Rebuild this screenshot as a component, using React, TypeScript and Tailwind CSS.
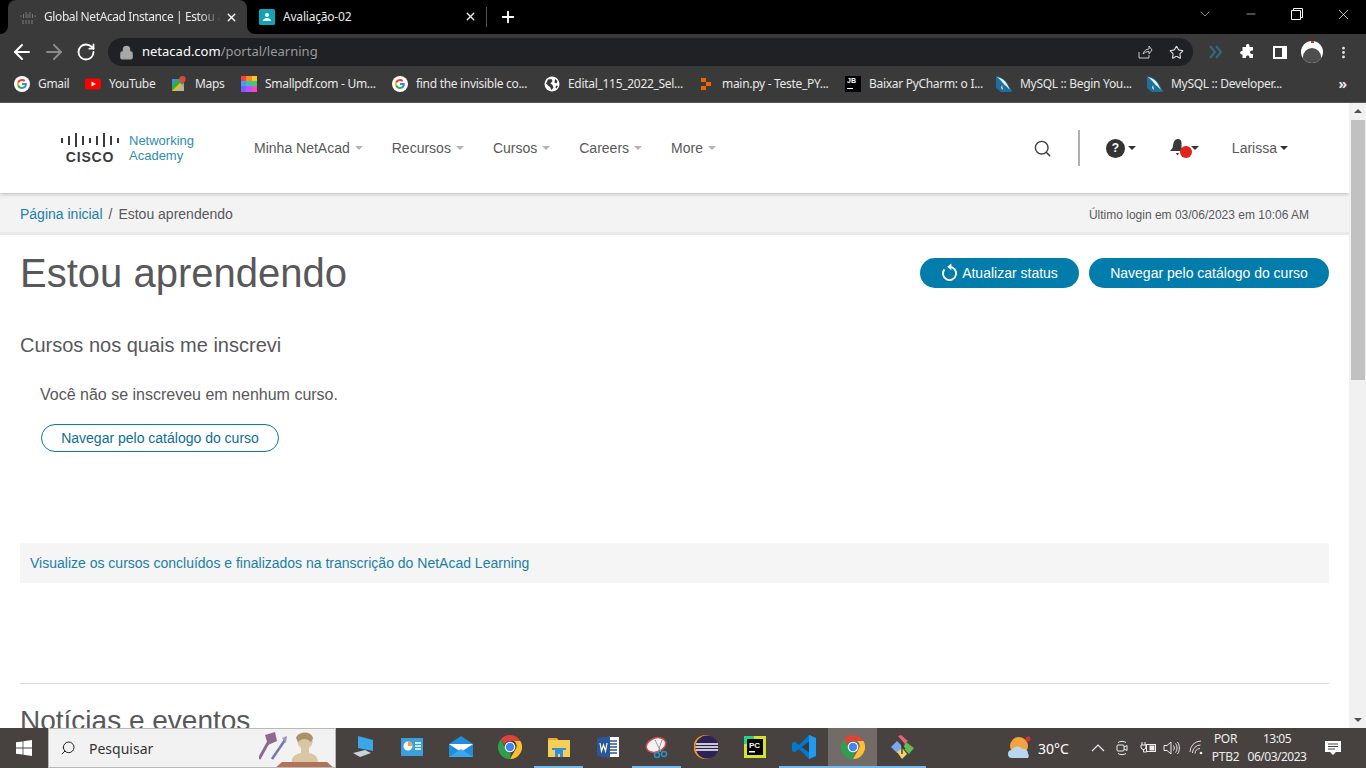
import { ArrowLeft, ArrowRight, ChevronDown, Lock, Minus, MoreVertical, Plus, RotateCw, Search, Star, X } from "lucide-react";

const arial = "font-['Liberation_Sans',Arial,sans-serif]";
const ui = "font-['Noto_Sans',sans-serif]";

function GoogleIcon() {
  return (
    <svg viewBox="0 0 16 16" className="w-4 h-4 shrink-0">
      <circle cx="8" cy="8" r="8" fill="#fff" />
      <path d="M12.900 8.100c0-.4 0-.7-.1-1H8v1.900h2.800c-.1.6-.5 1.200-1 1.500v1.300h1.600c1-.9 1.500-2.200 1.500-3.700z" fill="#4285f4" />
      <path d="M8 13c1.400 0 2.500-.5 3.400-1.200l-1.600-1.300c-.5.3-1 .5-1.800.5-1.300 0-2.500-.9-2.900-2.100H3.500v1.300C4.400 11.900 6 13 8 13z" fill="#34a853" />
      <path d="M5.100 8.900a3 3 0 0 1 0-1.900V5.700H3.500a5 5 0 0 0 0 4.500z" fill="#fbbc05" />
      <path d="M8 5c.8 0 1.400.3 1.900.8l1.400-1.400C10.500 3.500 9.400 3 8 3 6 3 4.400 4.100 3.500 5.700L5.100 7C5.500 5.800 6.700 5 8 5z" fill="#ea4335" />
    </svg>
  );
}

function YoutubeIcon() {
  return (
    <svg viewBox="0 0 16 16" className="w-4 h-4 shrink-0">
      <rect x="0" y="2.500" width="16" height="11" rx="3" fill="#f00" />
      <path d="M6.500 5.500v5L10.800 8z" fill="#fff" />
    </svg>
  );
}

function MapsIcon() {
  return (
    <svg viewBox="0 0 16 16" className="w-4 h-4 shrink-0">
      <path d="M1 3h12v12H1z" fill="#34a853" />
      <path d="M1 15 9 7l4 4v4z" fill="#fbbc05" />
      <path d="M1 3h5L1 8z" fill="#4285f4" />
      <path d="M4 15 13 6v9z" fill="#8ab4f8" opacity=".6" />
      <path d="M11.500 0a3.200 3.200 0 0 1 3.200 3.200C14.700 5.500 11.500 8 11.500 8S8.300 5.500 8.300 3.200A3.200 3.200 0 0 1 11.500 0z" fill="#d9483b" />
    </svg>
  );
}

function SmallpdfIcon() {
  const colors = ["#f6423f", "#fb8b1e", "#fdc42c", "#3aa0ff", "#37c6a2", "#48c774", "#7c5cff", "#c44dff", "#f24bc0"];
  return (
    <div className="grid grid-cols-3 w-4 h-4 shrink-0">
      {colors.map((c) => (
        <div key={c} style={{ background: c }} />
      ))}
    </div>
  );
}

function GlobeIcon() {
  return (
    <svg viewBox="0 0 16 16" className="w-4 h-4 shrink-0">
      <circle cx="8" cy="8" r="7.500" fill="#fff" />
      <path d="M4 3.500 7.500 3l1 2-2 2.500 2 1.500 1 2.500-2 2.500-1.500-3-2-1.500-2-2zM11 3l2.500 2-1 2.500-2-1zM12 9.500l2 .5-1.500 2.500-1-1z" fill="#3a3a3a" />
    </svg>
  );
}

function ReplIcon() {
  return (
    <svg viewBox="0 0 16 16" className="w-4 h-4 shrink-0">
      <path d="M3 2h5v4H3zM8 6h5v4H8zM3 10h5v4H3z" fill="#f26207" />
    </svg>
  );
}

function JbIcon() {
  return (
    <div className="w-4 h-4 shrink-0 bg-black flex flex-col px-[2px] pt-[1px]">
      <span className="text-white text-[7px] leading-[8px] font-bold font-['Liberation_Sans',sans-serif]">JB</span>
      <span className="w-[6px] h-px bg-white mt-[3px]" />
    </div>
  );
}

function MysqlIcon() {
  return (
    <svg viewBox="0 0 16 16" className="w-4 h-4 shrink-0">
      <path d="M0 0c6 1 11 5 13 10l3 5-1 1H5L0 12z" fill="#1f6f9c" />
      <path d="M1 1c5 1 9 4 11 9l2 4-4-4C7 8 6 5 1 1zM6 9l1 5-2-2z" fill="#e7f2f7" />
    </svg>
  );
}

const bookmarks = [
  { label: "Gmail", width: "w-[31px]", icon: <GoogleIcon /> },
  { label: "YouTube", width: "w-[46px]", icon: <YoutubeIcon /> },
  { label: "Maps", width: "w-[30px]", icon: <MapsIcon /> },
  { label: "Smallpdf.com - Um...", width: "w-[111px]", icon: <SmallpdfIcon /> },
  { label: "find the invisible co...", width: "w-[112px]", icon: <GoogleIcon /> },
  { label: "Edital_115_2022_Sel...", width: "w-[114px]", icon: <GlobeIcon /> },
  { label: "main.py - Teste_PY...", width: "w-[107px]", icon: <ReplIcon /> },
  { label: "Baixar PyCharm: o I...", width: "w-[111px]", icon: <JbIcon /> },
  { label: "MySQL :: Begin You...", width: "w-[111px]", icon: <MysqlIcon /> },
  { label: "MySQL :: Developer...", width: "w-[113px]", icon: <MysqlIcon /> },
];

function TabStrip() {
  return (
    <div className={`h-[34px] bg-black flex items-end pl-2 shrink-0 ${ui}`}>
      <div className="w-[239px] h-[34px] bg-[#3a3a3a] rounded-t-lg flex items-center pl-[12px] pr-[9px] relative">
        <span className="absolute -left-2 bottom-0 w-2 h-2 bg-[#3a3a3a]">
          <span className="block w-2 h-2 bg-black rounded-br-lg" />
        </span>
        <span className="absolute -right-2 bottom-0 w-2 h-2 bg-[#3a3a3a]">
          <span className="block w-2 h-2 bg-black rounded-bl-lg" />
        </span>
        <svg viewBox="0 0 16 16" className="w-4 h-4 shrink-0 mr-[8px]">
          <path d="M1 6v2M3.500 5v4M6 3v6M8 5v4M10 3v6M12.500 5v4M15 6v2" stroke="#777" strokeWidth="1" />
          <path d="M2 12h12M2 14h12" stroke="#666" strokeWidth="1.500" strokeDasharray="2 1" />
        </svg>
        <span className="flex-1 min-w-0 text-[12px] tracking-[-0.4px] text-[#e8e8e8] whitespace-nowrap overflow-hidden [mask-image:linear-gradient(to_right,black_88%,transparent)]">
          Global NetAcad Instance | Estou a
        </span>
        <X className="w-[13px] h-[13px] text-white ml-1 shrink-0" strokeWidth={2.500} />
      </div>
      <div className="w-[239px] h-[34px] flex items-center pl-[12px] pr-[9px] pb-px">
        <svg viewBox="0 0 16 16" className="w-4 h-4 shrink-0 mr-[8px]">
          <rect width="16" height="16" rx="1.500" fill="#12a4b4" />
          <circle cx="8" cy="6" r="2" fill="#fff" />
          <path d="M4 12c0-2 2-3 4-3s4 1 4 3z" fill="#fff" />
        </svg>
        <span className="flex-1 text-[12px] tracking-[-0.2px] text-[#e8e8e8] whitespace-nowrap">Avaliação-02</span>
        <X className="w-[13px] h-[13px] text-[#e8e8e8] shrink-0" strokeWidth={2.500} />
      </div>
      <div className="w-px h-[20px] bg-[#555] mb-[7px]" />
      <Plus className="w-[18px] h-[18px] text-white ml-[12px] mb-[8px]" strokeWidth={2.500} />
      <div className="flex-1 h-full flex items-start justify-end text-white">
        <div className="w-[46px] h-[28px] flex items-center justify-center">
          <ChevronDown className="w-[16px] h-[16px] text-[#ccc]" strokeWidth={1} />
        </div>
        <div className="w-[46px] h-[28px] flex items-center justify-center">
          <Minus className="w-[14px] h-[14px]" strokeWidth={1} />
        </div>
        <div className="w-[46px] h-[28px] flex items-center justify-center">
          <svg viewBox="0 0 12 12" className="w-[12px] h-[12px]" fill="none" stroke="#fff" strokeWidth="1">
            <path d="M.5 2.500h9v9h-9zM2.500 2.500v-2h9v9h-2" />
          </svg>
        </div>
        <div className="w-[46px] h-[28px] flex items-center justify-center">
          <X className="w-[17px] h-[17px]" strokeWidth={1} />
        </div>
      </div>
    </div>
  );
}

function Toolbar() {
  return (
    <div className={`h-[33px] bg-[#3a3a3a] flex items-center pt-[3px] shrink-0 ${ui}`}>
      <ArrowLeft className="w-[24px] h-[24px] ml-[10px] text-white shrink-0" strokeWidth={2} />
      <ArrowRight className="w-[24px] h-[24px] ml-[8px] text-[#8a8a8a] shrink-0" strokeWidth={2} />
      <RotateCw className="w-[20px] h-[20px] ml-[10px] text-white shrink-0" strokeWidth={2.200} />
      <div className="w-[1085px] h-[28px] ml-[12px] bg-[#202124] rounded-full flex items-center pl-[11px] pr-[9px] shrink-0">
        <Lock className="w-[15px] h-[15px] text-[#a8a8a8] shrink-0" fill="#a8a8a8" strokeWidth={2} />
        <span className="ml-[8px] text-[13px] text-white">netacad.com</span>
        <span className="text-[13px] text-[#9a9a9a]">/portal/learning</span>
        <svg viewBox="0 0 16 16" className="w-4 h-4 ml-auto mr-[16px] shrink-0" fill="none" stroke="#c8c8c8" strokeWidth="1">
          <path d="M2 8v6h10v-3M6 10c1-3 3-5 6-5V2l3 4-3 4V7.500c-3 0-4 1-6 2.500z" />
        </svg>
        <Star className="w-[15px] h-[15px] text-[#dcdcdc] shrink-0" strokeWidth={1.800} />
      </div>
      <svg viewBox="0 0 16 16" className="w-4 h-4 ml-[15px] shrink-0" fill="none" stroke="#2f6b80" strokeWidth="2">
        <path d="M2 2l5 6-5 6M8 2l5 6-5 6" />
      </svg>
      <svg viewBox="0 0 16 16" className="w-4 h-4 ml-[16px] shrink-0" fill="#fff">
        <path d="M6 1.500a1.800 1.800 0 0 1 3.500 0V3H13v3.500h-1.200a1.800 1.800 0 0 0 0 3.600H13V14H9.500v-1a1.800 1.800 0 0 0-3.500 0v1H2.500v-3.500h-.6a1.800 1.800 0 0 1 0-3.600h.6V3H6z" />
      </svg>
      <div className="w-[14px] h-[13px] ml-[17px] border-2 border-white bg-white flex shrink-0">
        <div className="w-[7px] bg-[#3a3a3a]" />
      </div>
      <div className="w-[22px] h-[22px] ml-[14px] rounded-full bg-white overflow-hidden flex items-end justify-center relative shrink-0">
        <span className="absolute top-0 w-[3px] h-[2px] bg-[#e2231a]" />
        <div className="w-[18px] h-[15px] rounded-t-full bg-[#4e4e4e]" />
      </div>
      <MoreVertical className="w-[15px] h-[15px] ml-[13px] text-[#e8e8e8] shrink-0" strokeWidth={2.500} />
    </div>
  );
}

function BookmarksBar() {
  return (
    <div className={`h-[36px] bg-[#3a3a3a] border-b border-[#555] flex items-center pl-[14px] pb-[2px] shrink-0 ${ui}`}>
      <div className="flex items-center gap-[16px]">
        {bookmarks.map((b) => (
          <div key={b.label} className="flex items-center gap-[8px]">
            {b.icon}
            <span className={`${b.width} text-[12px] tracking-[-0.3px] text-[#e8e8e8] whitespace-nowrap`}>{b.label}</span>
          </div>
        ))}
      </div>
      <span className="ml-auto mr-[19px] text-[14px] font-bold text-[#e8e8e8] leading-none">»</span>
    </div>
  );
}

function Caret({ className }: { className: string }) {
  return <span className={`w-0 h-0 border-x-[4px] border-x-transparent border-t-[4px] shrink-0 ${className}`} />;
}

function CiscoLogo() {
  const bars = [5, 9, 14, 9, 5, 9, 14, 9, 5];
  return (
    <div className="flex items-center">
      <div className="flex flex-col items-center w-[58px]">
        <div className="flex items-center gap-[4.500px] h-[16px]">
          {bars.map((h, i) => (
            <span key={i} className="w-[2.500px] bg-[#3a3a3a]" style={{ height: h }} />
          ))}
        </div>
        <span className={`text-[14px] leading-[14px] font-bold tracking-[0.800px] text-[#3a3a3a] mt-[2px] ${arial}`}>CISCO</span>
      </div>
      <div className="ml-[10px] text-[13px] leading-[15px] text-[#2f8db3]">
        Networking
        <br />
        Academy
      </div>
    </div>
  );
}

function NavBar() {
  const items = ["Minha NetAcad", "Recursos", "Cursos", "Careers", "More"];
  return (
    <div className="h-[90px] bg-white flex items-center pl-[61px] pr-[61px] shadow-[0_1px_4px_rgba(0,0,0,0.25)] relative shrink-0">
      <CiscoLogo />
      <div className="flex items-center ml-[60px] gap-[29px]">
        {items.map((item) => (
          <div key={item} className="flex items-center gap-[5px] text-[14px] text-[#58585b]">
            {item}
            <Caret className="border-t-[#b5b5b5]" />
          </div>
        ))}
      </div>
      <div className="ml-auto flex items-center">
        <Search className="w-[19px] h-[19px] text-[#3f3f3f]" strokeWidth={1.800} />
        <div className="w-[2px] h-[36px] bg-[#b0b0b0] ml-[26px]" />
        <div className="w-[19px] h-[19px] rounded-full bg-[#333] text-white text-[12px] font-bold flex items-center justify-center ml-[26px]">?</div>
        <Caret className="border-t-[#333] ml-[3px]" />
        <div className="relative ml-[33px] w-[22px] h-[20px]">
          <svg viewBox="0 0 16 18" className="w-[16px] h-[18px]" fill="#3a3a3a">
            <path d="M9 1c2.500 0 3.500 2 3.500 4v5l2 3H1l2.500-3 1-5C5 3 6.500 1 9 1zM7 15h3l-1 2H8z" />
          </svg>
          <span className="absolute left-[11px] top-[8px] w-[12px] h-[12px] rounded-full bg-[#e2231a]" />
        </div>
        <Caret className="border-t-[#333]" />
        <span className="ml-[33px] text-[14px] text-[#58585b]">Larissa</span>
        <Caret className="border-t-[#333] ml-[3px]" />
      </div>
    </div>
  );
}

function Breadcrumb() {
  return (
    <div className="h-[42px] bg-[#f3f3f3] border-b-[3px] border-[#e8e8e8] flex items-center pl-5 pr-10 pt-[4px] text-[14px] shrink-0">
      <span className="text-[#1a7fa6]">Página inicial</span>
      <span className="mx-[6px] text-[#58585b]">/</span>
      <span className="text-[#58585b]">Estou aprendendo</span>
      <span className="ml-auto text-[12px] text-[#58585b]">Último login em 03/06/2023 em 10:06 AM</span>
    </div>
  );
}

function Scrollbar() {
  return (
    <div className="w-[17px] bg-[#f1f1f1] flex flex-col items-center shrink-0">
      <span className="w-0 h-0 border-x-[4px] border-x-transparent border-b-[4px] border-b-[#505050] mt-[6px]" />
      <div className="w-[14px] h-[260px] bg-[#c1c1c1] mt-[7px]" />
      <span className="w-0 h-0 border-x-[4px] border-x-transparent border-t-[4px] border-t-[#505050] mt-auto mb-[6px]" />
    </div>
  );
}

function Page() {
  return (
    <div className="flex-1 flex min-h-0 overflow-hidden bg-white">
      <div className={`flex-1 flex flex-col min-w-0 overflow-hidden ${arial}`}>
        <NavBar />
        <Breadcrumb />
        <div className="px-5">
          <div className="flex items-start justify-between pt-[14px]">
            <h1 className="text-[40px] leading-[48px] text-[#58585b]">Estou aprendendo</h1>
            <div className="flex gap-[10px] mt-[9px]">
              <button className="h-[30px] w-[159px] rounded-full bg-[#027cab] text-white text-[14px] flex items-center justify-center gap-[3px]">
                <svg viewBox="0 0 18 20" className="w-[17px] h-[19px] -mt-[2px]" fill="none" stroke="#fff" strokeWidth="2">
                  <path d="M9 4A7 7 0 1 1 3.600 6.600" />
                  <path d="M11 0.500V7.500L6.500 4z" fill="#fff" stroke="none" />
                </svg>
                <span className="ml-px">Atualizar status</span>
              </button>
              <button className="h-[30px] w-[240px] rounded-full bg-[#027cab] text-white text-[14px]">
                Navegar pelo catálogo do curso
              </button>
            </div>
          </div>
          <h2 className="text-[20px] leading-[24px] text-[#58585b] mt-[36px]">Cursos nos quais me inscrevi</h2>
          <p className="text-[16px] leading-[20px] text-[#58585b] ml-5 mt-[28px]">Você não se inscreveu em nenhum curso.</p>
          <button className="h-[28px] w-[238px] ml-[21px] mt-[19px] rounded-full border border-[#027cab] text-[#0a6f97] text-[14px] block">
            Navegar pelo catálogo do curso
          </button>
          <div className="h-[40px] mt-[91px] bg-[#f5f5f5] flex items-center px-[10px] text-[14px] text-[#1a7fa6]">
            Visualize os cursos concluídos e finalizados na transcrição do NetAcad Learning
          </div>
          <div className="border-t border-[#dcdcdc] mt-[100px] pt-[20px]">
            <h2 className="text-[28px] leading-[34px] text-[#58585b]">Notícias e eventos</h2>
          </div>
        </div>
      </div>
      <Scrollbar />
    </div>
  );
}

function ChromeIcon() {
  return (
    <svg viewBox="0 0 24 24" className="w-6 h-6">
      <path d="M12 0a12 12 0 0 1 10.400 6H12a6 6 0 0 0-5.600 3.700L2.700 4.400A12 12 0 0 1 12 0z" fill="#db4437" />
      <path d="M22.400 6A12 12 0 0 1 12 24l5.200-9A6 6 0 0 0 16 6z" fill="#fbc02d" />
      <path d="M12 24A12 12 0 0 1 2.700 4.400L7.500 13a6 6 0 0 0 5.500 5z" fill="#2e9e4f" />
      <circle cx="12" cy="12" r="5.300" fill="#fff" />
      <circle cx="12" cy="12" r="4.200" fill="#4285f4" />
    </svg>
  );
}

const taskApps = [
  {
    id: "desktop",
    node: (
      <svg viewBox="0 0 24 24" className="w-6 h-6">
        <path d="M7 1l15 4v11L7 13z" fill="#3aa7e8" />
        <path d="M2 18l12-3 6 3-11 4z" fill="#c9d3da" />
      </svg>
    ),
  },
  {
    id: "panel",
    node: (
      <svg viewBox="0 0 24 24" className="w-6 h-6">
        <rect x="1" y="3" width="22" height="18" fill="#39a0dc" />
        <circle cx="8" cy="11" r="4.500" fill="#fff" />
        <path d="M8 11V6.500A4.500 4.500 0 0 1 12.500 11z" fill="#f2a33c" />
        <path d="M15 8h6M15 11h6M15 14h6" stroke="#fff" strokeWidth="1.500" />
      </svg>
    ),
  },
  {
    id: "mail",
    node: (
      <svg viewBox="0 0 24 24" className="w-6 h-6">
        <path d="M0 9l12-8 12 8v13H0z" fill="#1f8fdb" />
        <path d="M0 9h24l-12 8z" fill="#fff" />
        <path d="M0 22l12-8 12 8z" fill="#38a9ee" />
      </svg>
    ),
  },
  { id: "chrome", node: <ChromeIcon /> },
  {
    id: "files",
    running: true,
    node: (
      <svg viewBox="0 0 24 24" className="w-6 h-6">
        <path d="M1 3h9l2 3H1z" fill="#e6a92f" />
        <rect x="1" y="5" width="22" height="17" fill="#f7cf57" />
        <path d="M8 15h8v7h-3v-3h-2v3H8z" fill="#2f8fd8" />
        <rect x="5" y="13" width="14" height="2" fill="#2f8fd8" />
      </svg>
    ),
  },
  {
    id: "word",
    node: (
      <svg viewBox="0 0 24 24" className="w-6 h-6">
        <rect x="9" y="2" width="14" height="20" fill="#fff" />
        <path d="M14 6h7M14 9h7M14 12h7M14 15h7M14 18h7" stroke="#2b579a" strokeWidth="1.300" />
        <path d="M1 3l13-2v22L1 21z" fill="#2b579a" />
        <path d="M4 8l1.500 8L7.500 10l2 6L11 8" fill="none" stroke="#fff" strokeWidth="1.200" />
      </svg>
    ),
  },
  {
    id: "snip",
    running: true,
    node: (
      <svg viewBox="0 0 24 24" className="w-6 h-6">
        <ellipse cx="11" cy="10" rx="10" ry="7" fill="#f2f2f2" stroke="#d04a4a" strokeWidth="1.500" transform="rotate(-20 11 10)" />
        <path d="M10 5l6 12M17 5l-4 12" stroke="#9a9a9a" strokeWidth="1" />
        <circle cx="12" cy="20" r="2.500" fill="none" stroke="#2c8fc9" strokeWidth="1.500" />
        <circle cx="19" cy="19" r="2.500" fill="none" stroke="#2c8fc9" strokeWidth="1.500" />
      </svg>
    ),
  },
  {
    id: "eclipse",
    node: (
      <svg viewBox="0 0 24 24" className="w-6 h-6">
        <circle cx="11.500" cy="12" r="12" fill="#f7941e" />
        <circle cx="13" cy="12" r="11.500" fill="#2c2255" />
        <path d="M2 9h22M1.500 12h23M2 15h22" stroke="#fff" strokeWidth="1.300" />
      </svg>
    ),
  },
  {
    id: "pycharm",
    node: (
      <svg viewBox="0 0 24 24" className="w-6 h-6">
        <rect x="1" y="1" width="22" height="22" fill="#d6e22a" />
        <rect x="1" y="1" width="10" height="8" fill="#22d48a" />
        <rect x="4" y="4" width="16" height="16" fill="#000" />
        <text x="6" y="13" fontSize="8" fontWeight="700" fill="#fff" fontFamily="Liberation Sans">PC</text>
        <rect x="6" y="16" width="6" height="1.500" fill="#fff" />
      </svg>
    ),
  },
  {
    id: "vscode",
    running: true,
    node: (
      <svg viewBox="0 0 24 24" className="w-6 h-6">
        <path d="M17 0l7 3v18l-7 3-10-10-4.500 3.500L0 16v-8l2.500-1.500L7 10z" fill="#007acc" />
        <path d="M17 6.500L9.500 12l7.500 5.500z" fill="#3c3a38" />
        <path d="M17 0l7 3v18l-7 3z" fill="#1f9cf0" />
      </svg>
    ),
  },
  { id: "chrome-active", running: true, active: true, node: <ChromeIcon /> },
  {
    id: "git",
    running: true,
    node: (
      <svg viewBox="0 0 24 24" className="w-6 h-6">
        <path d="M12 13l-6-6-6 6 6 6z" fill="#7aa7ee" transform="translate(1 -1)" />
        <path d="M8 1l3-1 7 6-3 3z" fill="#e8626f" />
        <path d="M16 7l8 6-5 6-6-6z" fill="#66b84f" />
        <path d="M7 17l5-4 5 6-5 5z" fill="#f5d36b" />
        <path d="M12 7v12M12 11l3 3" stroke="#333" strokeWidth="1.300" />
      </svg>
    ),
  },
];

function Taskbar() {
  return (
    <div className={`h-[40px] bg-[#474240] flex items-stretch shrink-0 ${ui}`}>
      <div className="w-[48px] flex items-center justify-center shrink-0">
        <svg viewBox="0 0 16 16" className="w-4 h-4" fill="#fff">
          <path d="M0 2.300 6.600 1.400V7.600H0zM7.400 1.300 16 0V7.600H7.400zM0 8.400H6.600V14.600L0 13.700zM7.400 8.400H16V16L7.400 14.800z" />
        </svg>
      </div>
      <div className="w-[288px] bg-[#f2f2f2] border border-[#b8b8b8] flex items-center relative shrink-0 overflow-hidden">
        <Search className="w-[16px] h-[16px] ml-[11px] text-[#222] -scale-x-100" strokeWidth={1.500} />
        <span className="ml-[13px] text-[14px] text-[#333]">Pesquisar</span>
        <svg viewBox="0 0 76 40" className="absolute right-0 top-0 w-[76px] h-[40px]">
          <path d="M0 30 10 12" stroke="#8e6a8f" strokeWidth="3" />
          <path d="M6 6l10-3 2 9-9 4z" fill="#8e6a8f" />
          <path d="M13 30 26 11" stroke="#7a76b0" strokeWidth="2.500" />
          <path d="M23 9l5-2-1 7z" fill="#9a96c8" />
          <path d="M33 34c-1-6 3-9 9-10v-5c-3-2-5-8-3-12 3-5 12-5 14 0 2 5 0 10-3 12v5c6 1 9 4 9 10z" fill="#d9c7a3" />
          <path d="M37 9c2-7 15-7 17 0l-2 4c-4-4-9-4-13 0z" fill="#a8926c" />
          <path d="M15 40l8-7h45l8 7z" fill="#b0735a" />
        </svg>
      </div>
      <div className="flex items-stretch ml-[2px]">
        {taskApps.map((app) => (
          <div
            key={app.id}
            className={`w-[49px] flex items-center justify-center border-b-2 ${app.active ? "bg-[#736b68]" : ""} ${app.running ? "border-[#76b9ed]" : "border-transparent"}`}
          >
            {app.node}
          </div>
        ))}
      </div>
      <div className="flex-1" />
      <div className="flex items-center text-white">
        <svg viewBox="0 0 24 24" className="w-[24px] h-[24px] mr-[6px]">
          <circle cx="11" cy="10" r="9" fill="#f5a33c" />
          <circle cx="20" cy="3" r="2.500" fill="#d9342b" />
          <path d="M4 22a4 4 0 0 1 0-8c1-4 8-5 10-1a4.500 4.500 0 0 1 6 4.500 4 4 0 0 1 0 4.500z" fill="#b9d6f0" />
        </svg>
        <span className="text-[14px] w-[44px]">30°C</span>
        <svg viewBox="0 0 14 14" className="w-[14px] h-[14px] ml-[9px]" fill="none" stroke="#eee" strokeWidth="1.200">
          <path d="M1 10l6-6 6 6" />
        </svg>
        <svg viewBox="0 0 14 16" className="w-[14px] h-[16px] ml-[10px]" fill="none" stroke="#eee" strokeWidth="1">
          <rect x="2" y="5" width="7" height="6" rx="1" />
          <path d="M9 7l3-1.500v5L9 9M3 2.500c2-1.500 6-1.500 8 0M3 13.500c2 1.500 6 1.500 8 0" />
        </svg>
        <svg viewBox="0 0 16 12" className="w-[16px] h-[12px] ml-[11px]" fill="none" stroke="#eee" strokeWidth="1">
          <path d="M2 0v3M5 0v3M1 3h5v2a2 2 0 0 1-5 0zM3.500 7v3h3" />
          <rect x="6.500" y="2.500" width="9" height="7" />
          <rect x="10" y="4" width="4" height="4" fill="#eee" />
        </svg>
        <svg viewBox="0 0 18 16" className="w-[18px] h-[16px] ml-[7px]" fill="none" stroke="#eee" strokeWidth="1">
          <path d="M1 5.500h3L8 2v12l-4-3.500H1zM10.500 5.500c1 1.500 1 3.500 0 5M12.500 3.500c2 2.500 2 6.500 0 9M14.500 2c2.500 3.500 2.500 8.500 0 12" />
        </svg>
        <svg viewBox="0 0 16 16" className="w-[16px] h-[16px] ml-[8px]" fill="none" stroke="#ddd" strokeWidth="1">
          <path d="M1 12a11 11 0 0 1 11-11M3.500 13a8 8 0 0 1 8-8M6 13.500a5.500 5.500 0 0 1 5-5" />
          <circle cx="12" cy="13" r="1.300" fill="#eee" stroke="none" />
        </svg>
        <div className="ml-[4px] w-[33px] text-[12px] tracking-[-0.3px] leading-[18px] text-center text-[#eee]">
          POR
          <br />
          PTB2
        </div>
        <div className="ml-[3px] w-[64px] text-[12px] tracking-[-0.5px] leading-[18px] text-center text-[#eee]">
          13:05
          <br />
          06/03/2023
        </div>
        <div className="w-[40px] ml-[4px] mr-[13px] flex justify-center">
          <svg viewBox="0 0 16 16" className="w-[16px] h-[16px]">
            <path d="M0 1h16v11h-5l-3 3-3-3H0z" fill="#fff" />
            <path d="M3 4h10M3 6.500h10M3 9h7" stroke="#474240" strokeWidth="1" />
          </svg>
        </div>
      </div>
    </div>
  );
}

export default function App() {
  return (
    <div className="w-[1366px] h-[768px] flex flex-col overflow-hidden">
      <TabStrip />
      <Toolbar />
      <BookmarksBar />
      <Page />
      <Taskbar />
    </div>
  );
}
